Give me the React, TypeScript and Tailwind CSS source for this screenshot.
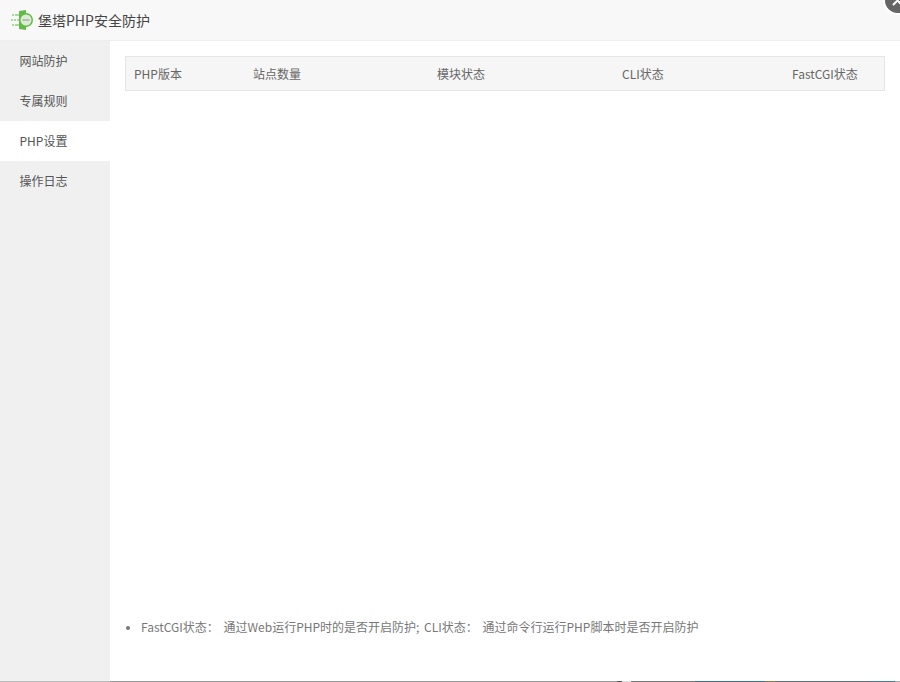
const cols = [
  { label: 'PHP版本', className: 'w-[119px] pl-2' },
  { label: '站点数量', className: 'w-[184px] pl-2' },
  { label: '模块状态', className: 'w-[185px] pl-2' },
  { label: 'CLI状态', className: 'w-[170px] pl-2' },
  { label: 'FastCGI状态', className: 'flex-1 pl-2' },
];

const menu = ['网站防护', '专属规则', 'PHP设置', '操作日志'];

// strip under the window, the desktop shows through here
const bottomBar = [
  { width: 'w-[110px]', color: 'bg-[#bdbdbd]' },
  { width: 'w-[507px]', color: 'bg-[#959595]' },
  { width: 'w-[5px]', color: 'bg-[#555]' },
  { width: 'w-[9px]', color: 'bg-[#ddd]' },
  { width: 'w-[64px]', color: 'bg-[#777]' },
  { width: 'w-[70px]', color: 'bg-[#3f6f9c]' },
  { width: 'w-[10px]', color: 'bg-[#8a7a45]' },
  { width: 'w-[95px]', color: 'bg-[#5f6f80]' },
  { width: 'w-[25px]', color: 'bg-[#4a78a5]' },
  { width: 'flex-1', color: 'bg-[#aaa]' },
];

function Logo() {
  return (
    <svg width="23" height="20" viewBox="0 0 23 20" className="block">
      <g fill="#a5dc98">
        <rect x="1" y="4" width="2" height="2" />
        <rect x="4" y="4" width="2" height="2" />
        <rect x="6" y="4" width="2" height="2" />
        <rect x="0" y="9" width="2" height="2" />
        <rect x="3" y="9" width="2" height="2" />
        <rect x="6" y="9" width="2" height="2" />
        <rect x="1" y="14" width="2" height="2" />
        <rect x="4" y="14" width="2" height="2" />
        <rect x="6" y="14" width="2" height="2" />
      </g>
      <path d="M8 1 L15 0 L15 20 L8 19 Z" fill="#62bb46" />
      <circle cx="15" cy="10" r="7" fill="#62bb46" />
      <circle cx="15" cy="10" r="5.5" fill="#dfe9da" />
      <rect x="11.5" y="9" width="7" height="2" fill="#b4c0ae" />
    </svg>
  );
}

export default function App() {
  return (
    <div className="relative h-[682px] w-[900px] overflow-hidden bg-white font-['Noto_Sans_CJK_SC','Liberation_Sans',sans-serif] text-xs text-[#666]">
      <div className="flex h-[41px] items-center gap-[4px] border-b border-[#eee] bg-[#f8f8f8] pl-[11px] text-sm text-[#444]">
        <Logo />
        <span>堡塔PHP安全防护</span>
      </div>

      <div className="flex h-[640px]">
        <div className="w-[110px] shrink-0 bg-[#f0f0f0]">
          {menu.map((item) => (
            <div
              key={item}
              className={`flex h-10 items-center pl-[19.5px] text-[#555] ${item === 'PHP设置' ? 'bg-white' : ''}`}
            >
              {item}
            </div>
          ))}
        </div>

        <div className="flex flex-1 flex-col px-[15px] pt-[15px]">
          <div className="flex h-[35px] items-center border border-[#e5e5e5] bg-[#f6f6f6]">
            {cols.map((col) => (
              <div key={col.label} className={col.className}>
                {col.label}
              </div>
            ))}
          </div>
          <ul className="mt-[528px] list-disc pl-4 text-[#777] [word-spacing:2px] marker:text-[10px] marker:text-[#777]">
            <li>FastCGI状态： 通过Web运行PHP时的是否开启防护; CLI状态： 通过命令行运行PHP脚本时是否开启防护</li>
          </ul>
        </div>
      </div>

      <div className="flex h-px">
        {bottomBar.map((seg, i) => (
          <div key={i} className={`${seg.width} ${seg.color}`} />
        ))}
      </div>

      <div className="absolute right-[-12px] top-[-14px] flex h-[29px] w-[29px] items-center justify-center rounded-full border-2 border-white bg-[#666]">
        <svg width="13" height="13" viewBox="0 0 13 13" stroke="white" strokeWidth="2">
          <path d="M2 2 L11 11 M11 2 L2 11" />
        </svg>
      </div>
    </div>
  );
}
